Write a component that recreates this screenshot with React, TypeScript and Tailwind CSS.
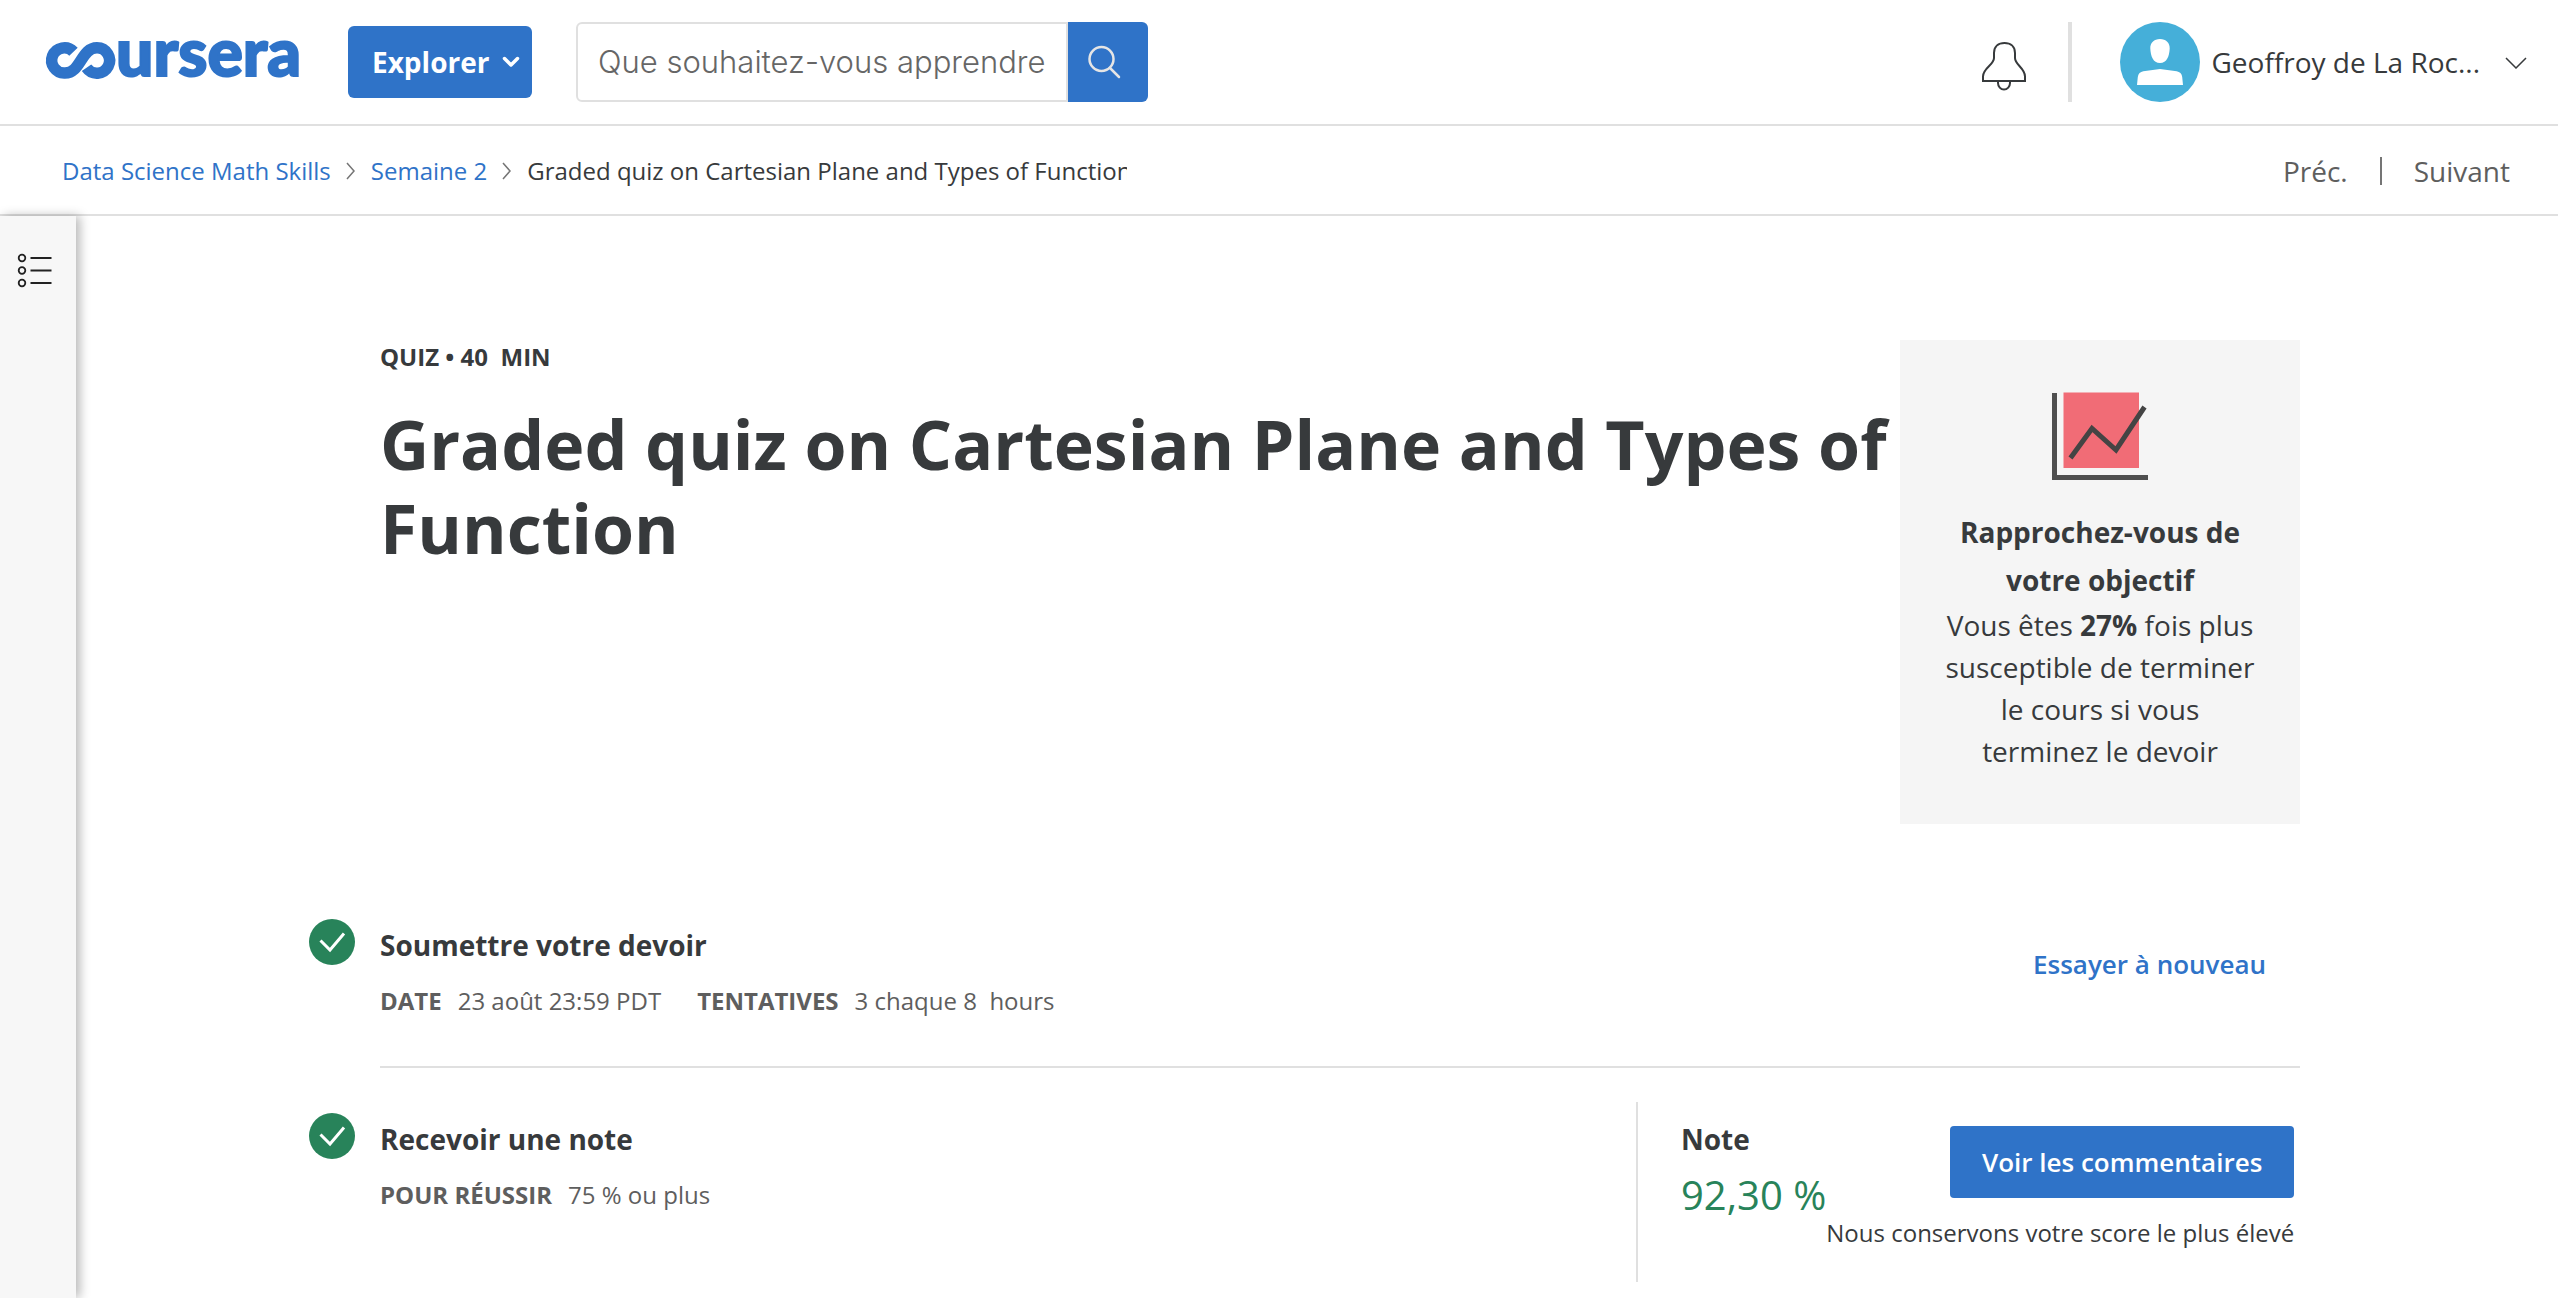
import type { ReactNode } from "react";

function Logo() {
  return (
    <a href="#accueil" aria-label="coursera" className="block text-[#2f73c8]">
      <svg width="258" height="40" viewBox="0 0 258 40" className="block overflow-visible">
        <path
          d="M27.500 9.800A12.600 12.600 0 1 0 19 31C35 31 35 5.800 51 5.800A12.700 12.700 0 1 1 40.500 25.800"
          fill="none"
          stroke="currentColor"
          strokeWidth="11.5"
        />
        <text
          x="70"
          y="34"
          fill="currentColor"
          stroke="currentColor"
          strokeWidth="2"
          className="font-['Lato',sans-serif] text-[66px] font-black"
        >
          ursera
        </text>
      </svg>
    </a>
  );
}

function BreadcrumbChevron() {
  return (
    <svg width="10" height="18" viewBox="0 0 10 18" fill="none" stroke="#757575" strokeWidth="1.5" aria-hidden="true">
      <path d="M1 1l7 8-7 8" />
    </svg>
  );
}

function Header() {
  return (
    <header className="flex h-[126px] shrink-0 items-center border-b-2 border-[#e0e0e0] pr-[30px] pl-[46px]">
      <Logo />
      <button
        type="button"
        className="ml-[44px] flex h-[72px] w-[184px] items-center justify-between rounded-md bg-[#2f73c8] pr-[12px] pl-[24px] text-[28px] font-bold text-white"
      >
        Explorer
        <svg width="18" height="12" viewBox="0 0 18 12" fill="none" stroke="currentColor" strokeWidth="3.5" strokeLinecap="round" strokeLinejoin="round" aria-hidden="true">
          <path d="M2.5 2.5L9 9l6.500-6.500" />
        </svg>
      </button>
      <form className="ml-[44px] flex h-[80px] w-[572px]" onSubmit={(e) => e.preventDefault()}>
        <input
          type="text"
          aria-label="Rechercher"
          placeholder="Que souhaitez-vous apprendre"
          className="min-w-0 flex-1 rounded-l-md border-2 border-[#e0e0e0] pl-[20px] font-['Inter',sans-serif] text-[31px] font-light placeholder:text-[#666]"
        />
        <button type="submit" aria-label="Lancer la recherche" className="flex w-[80px] items-center rounded-r-md bg-[#2f73c8] pl-[20px]">
          <svg width="34" height="34" viewBox="0 0 34 34" fill="none" stroke="#e5e5e5" strokeWidth="2.5" strokeLinecap="round">
            <circle cx="13.500" cy="14" r="12" />
            <path d="M22 23l9 9" />
          </svg>
        </button>
      </form>
      <div className="ml-auto flex items-center">
        <button type="button" aria-label="Notifications" className="pt-[8px]">
          <svg width="44" height="50" viewBox="0 0 44 50" fill="none" stroke="#373a3c" strokeWidth="2">
            <path d="M1 40V35.500C1 27 12 24 12 17V12C12 5.500 16.500 2 22.500 2S33 5.500 33 12V17C33 24 43 27 43 35.500V40Z" />
            <path d="M16 40v2a6 6.500 0 0 0 12 0v-2" />
          </svg>
        </button>
        <div className="ml-[42px] h-[80px] w-[4px] bg-[#e0e0e0]" />
        <button type="button" className="ml-[48px] flex items-center text-[28px] text-[#373a3c]">
          <svg width="80" height="80" viewBox="0 0 80 80" aria-hidden="true">
            <circle cx="40" cy="40" r="40" fill="#45afd9" />
            <path
              fill="#fff"
              d="M40 17c6 0 10 4 9.700 9.500C49.300 34 47 41 40 41s-9.300-7-9.700-14.500C30 21 34 17 40 17zM17 63l.8-8c.4-3.500 2.500-5 5.500-5.700L40 47l16.700 2.300c3 .7 5.200 2.200 5.500 5.700l.8 8z"
            />
          </svg>
          <span className="ml-[11px]">Geoffroy de La Roc...</span>
          <svg className="ml-[24px]" width="24" height="14" viewBox="0 0 24 14" fill="none" stroke="currentColor" strokeWidth="1.500" aria-hidden="true">
            <path d="M2 3l10 10L22 3" />
          </svg>
        </button>
      </div>
    </header>
  );
}

function Breadcrumbs() {
  return (
    <div className="flex h-[90px] shrink-0 items-center border-b-2 border-[#e0e0e0] pt-[2px] pr-[48px] pl-[62px]">
      <nav aria-label="Fil d'Ariane" className="flex items-center gap-[15px] text-[24px] leading-[36px] whitespace-nowrap">
        <a href="#cours" className="text-[#2f73c8]">Data Science Math Skills</a>
        <BreadcrumbChevron />
        <a href="#semaine-2" className="text-[#2f73c8]">Semaine 2</a>
        <BreadcrumbChevron />
        <span className="w-[600px] overflow-hidden">Graded quiz on Cartesian Plane and Types of Function</span>
      </nav>
      <div className="ml-auto flex items-center gap-[32px] text-[28px] text-[#5e5e5e]">
        <a href="#precedent">Préc.</a>
        <span className="h-[28px] w-[2px] bg-[#757575]" />
        <a href="#suivant">Suivant</a>
      </div>
    </div>
  );
}

function Sidebar() {
  return (
    <aside className="w-[76px] shrink-0 bg-[#f7f7f7] pt-[37px] pl-[17px] shadow-[4px_0_10px_rgba(0,0,0,0.28)]">
      <button type="button" aria-label="Afficher le plan du cours" className="block">
        <svg width="36" height="36" viewBox="0 0 36 36" fill="none" stroke="#222" strokeWidth="1.800">
          <circle cx="5" cy="5" r="3.300" />
          <circle cx="5" cy="17.500" r="3.300" />
          <circle cx="5" cy="30" r="3.300" />
          <path d="M13.500 5h21M13.500 17.500h21M13.500 30h21" />
        </svg>
      </button>
    </aside>
  );
}

function GoalCard() {
  return (
    <section className="flex w-[400px] shrink-0 flex-col items-center bg-[#f5f5f5] px-[44px] py-[52px] text-center text-[28px]">
      <svg width="96" height="88" viewBox="0 0 96 88" fill="none" aria-hidden="true">
        <rect x="11.500" y="0.500" width="75.500" height="75.500" fill="#f16c76" />
        <path d="M2.500 1v84.500H96" stroke="#4f4f4f" strokeWidth="5" />
        <path d="M18.500 66L40 36.500 64 58l28.500-43" stroke="#444" strokeWidth="5" />
      </svg>
      <h2 className="mt-[28px] leading-[48px] font-bold">Rapprochez-vous de votre objectif</h2>
      <p className="leading-[42px]">
        Vous êtes <b>27%</b> fois plus susceptible de terminer le cours si vous terminez le devoir
      </p>
    </section>
  );
}

function Step({ title, details, children }: { title: string; details: [string, string][]; children: ReactNode }) {
  return (
    <>
      <svg className="mt-[45px] shrink-0" width="46" height="46" viewBox="0 0 46 46" fill="none" aria-hidden="true">
        <circle cx="23" cy="23" r="23" fill="#28835a" />
        <path d="M11.500 21.500l9.500 9.500L35 14.500" stroke="#fff" strokeWidth="3" />
      </svg>
      <div className="mt-[47px] ml-[25px] flex-1">
        <h2 className="text-[28px] leading-[48px] font-bold">{title}</h2>
        <dl className="mt-[14px] flex gap-[36px] text-[24px] leading-[36px] text-[#5e5e5e]">
          {details.map(([label, value]) => (
            <div key={label} className="flex gap-[16px]">
              <dt className="font-bold">{label}</dt>
              <dd className="whitespace-pre">{value}</dd>
            </div>
          ))}
        </dl>
      </div>
      {children}
    </>
  );
}

export default function App() {
  return (
    <div className="flex min-h-screen flex-col overflow-x-hidden bg-white font-['Open_Sans',sans-serif] text-[#373a3c]">
      <Header />
      <Breadcrumbs />
      <div className="flex flex-1">
        <Sidebar />
        <main className="min-w-0 flex-1 pt-[124px] pr-[258px] pb-[16px] pl-[233px]">
          <div className="flex pl-[71px]">
            <div className="min-w-0 flex-1">
              <p className="text-[24px] leading-[34px] font-bold whitespace-pre">QUIZ • 40{"  "}MIN</p>
              <h1 className="mt-[28px] text-[68px] leading-[84px] font-bold">
                Graded quiz on Cartesian Plane and Types of Function
              </h1>
            </div>
            <GoalCard />
          </div>

          <div className="mt-[50px] flex pb-[47px]">
            <Step
              title="Soumettre votre devoir"
              details={[
                ["DATE", "23 août 23:59 PDT"],
                ["TENTATIVES", "3 chaque 8  hours"],
              ]}
            >
              <button type="button" className="mt-[70px] mr-[34px] h-[40px] self-start text-[26px] leading-[36px] font-semibold text-[#2f73c8]">
                Essayer à nouveau
              </button>
            </Step>
          </div>
          <hr className="ml-[71px] border-t-2 border-[#e0e0e0]" />

          <div className="flex">
            <Step title="Recevoir une note" details={[["POUR RÉUSSIR", "75 % ou plus"]]}>
              <div className="mt-[34px] flex h-[180px] w-[664px] justify-between border-l-2 border-[#e0e0e0] pr-[7px] pl-[43px] whitespace-nowrap">
                <div className="pt-[13px]">
                  <h2 className="text-[28px] leading-[48px] font-bold">Note</h2>
                  <p className="mt-[4px] text-[40px] leading-[56px] text-[#28835a]">92,30 %</p>
                </div>
                <div className="flex flex-col items-end pt-[24px]">
                  <button type="button" className="h-[72px] w-[344px] rounded bg-[#2f73c8] text-[26px] font-semibold text-white">
                    Voir les commentaires
                  </button>
                  <p className="mt-[17px] text-[24px] leading-[36px]">Nous conservons votre score le plus élevé</p>
                </div>
              </div>
            </Step>
          </div>
        </main>
      </div>
    </div>
  );
}
